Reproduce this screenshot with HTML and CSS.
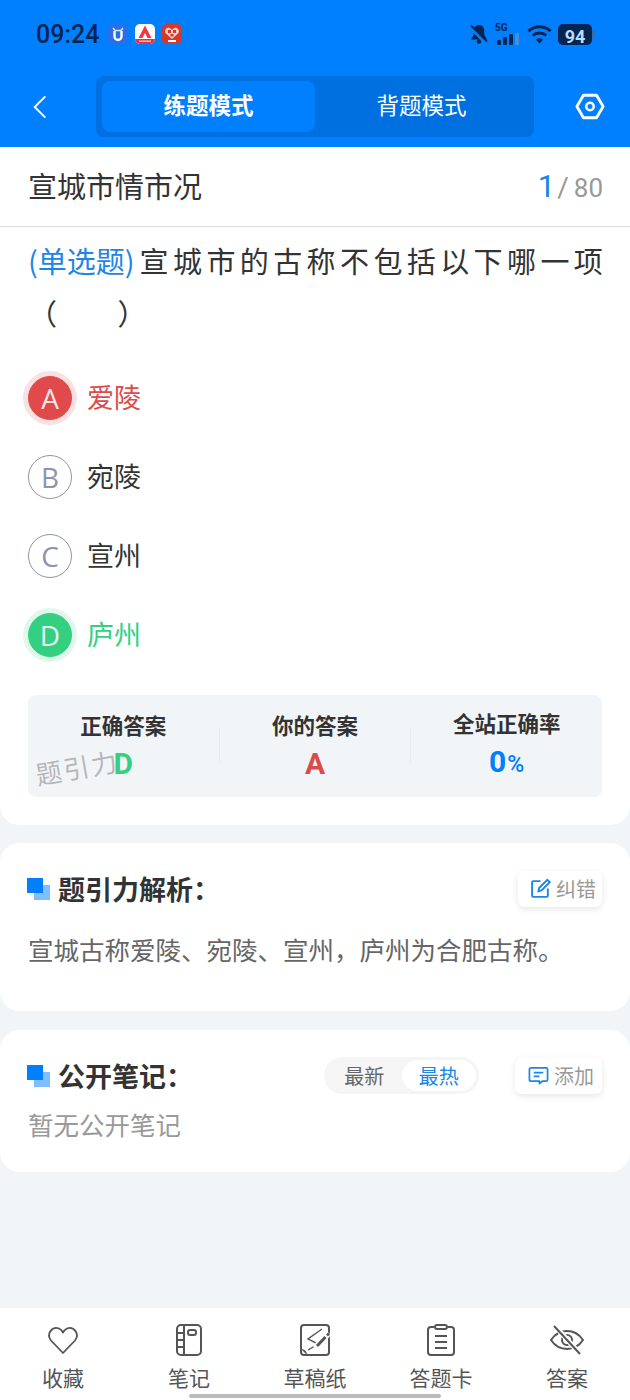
FILE: index.html
```html
<!DOCTYPE html>
<html lang="zh-CN">
<head>
  <meta charset="UTF-8">
  <title>练题模式</title>
  <link rel="stylesheet" href="styles.css">
</head>
<body>

<div class="app">
  <header class="top">
    <div class="status-bar">
      <div class="status-left">
        <span class="time">09:24</span>
        <svg class="app-icon" viewBox="0 0 20 20"><rect width="20" height="20" rx="5" fill="#2b6fe8"/><path d="M6.500 7v5.500a3.500 3.500 0 0 0 7 0V7" fill="none" stroke="#fff" stroke-width="2.400"/><path d="M5 4l2 2.500h6L15 4" fill="none" stroke="#d6e4ff" stroke-width="1.500"/></svg>
        <svg class="app-icon" viewBox="0 0 20 20"><rect width="20" height="20" rx="5" fill="#fff"/><path d="M10 1.500 16.500 14h-4L10 9l-2.500 5h-4z" fill="#ee3a44"/><path d="M0 15h20a5 5 0 0 1-5 5H5a5 5 0 0 1-5-5z" fill="#e8323c"/><rect x="4" y="16.500" width="12" height="1.400" fill="#f8c4c6"/></svg>
        <svg class="app-icon" viewBox="0 0 20 20"><rect width="20" height="20" rx="5" fill="#d8382c"/><path d="M10 15 3.500 9C1.800 5.800 5.500 2.600 8 4.200L10 5.800l2-1.600c2.500-1.600 6.200 1.600 4.500 4.800z" fill="#f6cfc4"/><path d="M6 6h3v3H6zM11 6h3v3h-3zM8.500 10h3v2.500h-3z" fill="#d8382c"/><rect x="6" y="16" width="8" height="2" fill="#fff"/></svg>
      </div>
      <div class="status-right">
        <svg class="bell" viewBox="0 0 20 20"><path d="M10 1c-3.400 0-5.300 2.500-5.300 5.600v4.400L2.500 14.500v1h15v-1L15.300 11V6.600C15.300 3.500 13.400 1 10 1z" fill="#04254f"/><circle cx="10" cy="17.500" r="2.300" fill="#04254f"/><path d="M1 3l16 16" stroke="#007fff" stroke-width="3.600"/><path d="M2 1.500l16 16" stroke="#04254f" stroke-width="1.800"/></svg>
        <div class="signal">
          <span class="net">5G</span>
          <svg viewBox="0 0 24 12" class="bars"><rect x="1" y="7" width="4" height="5" rx="1" fill="#04254f"/><rect x="7" y="4" width="4" height="8" rx="1" fill="#04254f"/><rect x="13" y="1" width="4" height="11" rx="1" fill="#04254f"/><rect x="19" y="0" width="4" height="12" rx="1" fill="#3d8fe0"/></svg>
        </div>
        <svg class="wifi" viewBox="0 0 26 20"><path d="M1.500 7C8 1 18 1 24.500 7" fill="none" stroke="#04254f" stroke-width="3"/><path d="M6 11.500c4-3.400 10-3.400 14 0" fill="none" stroke="#04254f" stroke-width="3"/><path d="M13 20l-3.800-4.300c2.200-1.600 5.400-1.600 7.600 0z" fill="#04254f"/></svg>
        <div class="battery"><span>94</span></div>
      </div>
    </div>
    <nav class="nav-bar">
      <svg class="back" viewBox="0 0 18 28"><path d="M15 2 3 14l12 12" fill="none" stroke="#fff" stroke-width="2.200"/></svg>
      <div class="mode-tabs">
        <div class="mode-tab active">练题模式</div>
        <div class="mode-tab">背题模式</div>
      </div>
      <svg class="gear" viewBox="0 0 32 28"><path d="M9 2h14l7 12-7 12H9L2 14z" fill="none" stroke="#fff" stroke-width="3" stroke-linejoin="round"/><circle cx="16" cy="14" r="4" fill="none" stroke="#fff" stroke-width="2.600"/></svg>
    </nav>
  </header>

  <section class="card question-card">
    <div class="title-row">
      <span class="chapter">宣城市情市况</span>
      <span class="progress"><b>1</b><i>/</i>80</span>
    </div>
    <div class="question">
      <div class="q-line"><span class="q-type">(单选题)</span><span>宣城市的古称不包括以下哪一项</span></div>
      <div class="q-line"><span>（</span><span class="blank"></span><span>）</span></div>
    </div>
    <ul class="options">
      <li class="option wrong"><span class="letter">A</span><span class="opt-text">爱陵</span></li>
      <li class="option"><span class="letter">B</span><span class="opt-text">宛陵</span></li>
      <li class="option"><span class="letter">C</span><span class="opt-text">宣州</span></li>
      <li class="option right"><span class="letter">D</span><span class="opt-text">庐州</span></li>
    </ul>
    <div class="stats">
      <div class="stat">
        <div class="stat-label">正确答案</div>
        <div class="stat-value green">D</div>
      </div>
      <div class="stat">
        <div class="stat-label">你的答案</div>
        <div class="stat-value red">A</div>
      </div>
      <div class="stat">
        <div class="stat-label">全站正确率</div>
        <div class="stat-value blue">0<small>%</small></div>
      </div>
      <span class="watermark">题引力</span>
    </div>
  </section>

  <section class="card analysis-card">
    <div class="card-head">
      <h2 class="card-title"><span class="squares"></span>题引力解析：</h2>
      <div class="mini-btn">
        <svg viewBox="0 0 20 20"><path d="M10 3H3a1 1 0 0 0-1 1v13a1 1 0 0 0 1 1h13a1 1 0 0 0 1-1v-7" fill="none" stroke="#1c86e6" stroke-width="1.800"/><path d="M8 12.500l.7-3L16.500 1.700l2.300 2.300-7.800 7.800z" fill="none" stroke="#1c86e6" stroke-width="1.800"/></svg>
        纠错
      </div>
    </div>
    <p class="analysis">宣城古称爱陵、宛陵、宣州，庐州为合肥古称。</p>
  </section>

  <section class="card notes-card">
    <div class="card-head">
      <h2 class="card-title"><span class="squares"></span>公开笔记：</h2>
      <div class="note-tools">
        <div class="sort">
          <span>最新</span>
          <span class="on">最热</span>
        </div>
        <div class="mini-btn wide">
          <svg viewBox="0 0 22 20"><path d="M3 2h16a1.500 1.500 0 0 1 1.500 1.500v11A1.500 1.500 0 0 1 19 16h-4l-3 2.500V16H3a1.500 1.500 0 0 1-1.500-1.500v-11A1.500 1.500 0 0 1 3 2z" fill="none" stroke="#1c86e6" stroke-width="1.800" stroke-linejoin="round"/><path d="M6 7h10M6 11h6" stroke="#1c86e6" stroke-width="1.800"/></svg>
          添加
        </div>
      </div>
    </div>
    <p class="empty">暂无公开笔记</p>
  </section>

  <footer class="tabbar">
    <div class="tab">
      <svg viewBox="0 0 34 32"><path d="M17 29 5 16.500C0 10 6 2 13 4.500c2 1 3 2 4 4 1-2 2-3 4-4 7-2.500 13 5.500 8 12z" fill="none" stroke="#555" stroke-width="1.800" stroke-linejoin="round"/></svg>
      <span>收藏</span>
    </div>
    <div class="tab">
      <svg viewBox="0 0 34 32"><rect x="5" y="1" width="24" height="30" rx="4" fill="none" stroke="#555" stroke-width="2"/><path d="M12 1v30M5 9h7M5 16h7M5 23h7" stroke="#555" stroke-width="2"/><rect x="16" y="6" width="8" height="5" rx="2" fill="none" stroke="#555" stroke-width="2"/></svg>
      <span>笔记</span>
    </div>
    <div class="tab">
      <svg viewBox="0 0 34 32"><path d="M9 31H6a3 3 0 0 1-3-3V4a3 3 0 0 1 3-3h22a3 3 0 0 1 3 3v24a3 3 0 0 1-3 3z" fill="none" stroke="#555" stroke-width="2"/><path d="M3 25c3 0 6 2 6 6z" fill="#555"/><path d="M24 5 10 15l10 5-10 6" fill="none" stroke="#555" stroke-width="1.400"/><path d="M17 24 31 9" stroke="#fff" stroke-width="6"/><path d="M19 22 27.500 13" stroke="#555" stroke-width="3"/><path d="M29 11.500 31 9.500" stroke="#555" stroke-width="2.600"/></svg>
      <span>草稿纸</span>
    </div>
    <div class="tab">
      <svg viewBox="0 0 34 32"><path d="M10 3H7a3 3 0 0 0-3 3v22a3 3 0 0 0 3 3h20a3 3 0 0 0 3-3V6a3 3 0 0 0-3-3h-3" fill="none" stroke="#555" stroke-width="2"/><rect x="11" y="1" width="12" height="4" rx="2" fill="none" stroke="#555" stroke-width="2"/><path d="M11 12h12M11 18h12M11 24h12" stroke="#555" stroke-width="2"/></svg>
      <span>答题卡</span>
    </div>
    <div class="tab">
      <svg viewBox="0 0 34 32"><path d="M1 16C9 4 25 4 33 16 25 28 9 28 1 16z" fill="none" stroke="#555" stroke-width="2"/><circle cx="17" cy="16" r="5" fill="none" stroke="#555" stroke-width="2"/><path d="M5 2l25 28" stroke="#fff" stroke-width="5"/><path d="M4 2l26 28" stroke="#555" stroke-width="2"/></svg>
      <span>答案</span>
    </div>
    <div class="home-bar"></div>
  </footer>
</div>

</body>
</html>
```

FILE: styles.css
```css
* {
  box-sizing: border-box;
}

body {
  margin: 0;
  background: #f2f5f8;
  font-family: "Noto Sans CJK SC", "Noto Sans", sans-serif;
  color: #333;
}

.app {
  width: 630px;
  height: 1400px;
  display: flex;
  flex-direction: column;
  position: relative;
  overflow: hidden;
}

/* header */

.top {
  height: 147px;
  background: #007fff;
  flex-shrink: 0;
}

.status-bar {
  height: 76px;
  padding: 14px 38px 0 36px;
  display: flex;
  justify-content: space-between;
  align-items: flex-start;
}

.status-left,
.status-right {
  display: flex;
  align-items: center;
  height: 40px;
}

.time {
  font-family: Roboto, sans-serif;
  font-size: 25px;
  font-weight: 500;
  color: #04254f;
  margin-right: 9px;
}

.app-icon {
  width: 20px;
  height: 20px;
  margin-right: 7px;
}

.bell {
  width: 20px;
  height: 20px;
  margin-right: 6px;
}

.signal {
  width: 25px;
  height: 21px;
  position: relative;
  margin-right: 7px;
}

.net {
  position: absolute;
  left: 0;
  top: 0;
  font-family: Roboto, sans-serif;
  font-size: 10px;
  line-height: 8px;
  font-weight: 700;
  color: #04254f;
}

.bars {
  position: absolute;
  left: 1px;
  bottom: 0;
  width: 24px;
  height: 12px;
}

.wifi {
  width: 25px;
  height: 20px;
  margin-right: 6px;
}

.battery {
  width: 34px;
  height: 21px;
  background: #04254f;
  border-radius: 5px;
  text-align: center;
  position: relative;
}

.battery::after {
  content: "";
  position: absolute;
  right: -3px;
  top: 6px;
  width: 3px;
  height: 9px;
  background: #2f6fb3;
  border-radius: 0 2px 2px 0;
}

.battery span {
  font-family: Roboto, sans-serif;
  font-size: 18px;
  font-weight: 700;
  line-height: 21px;
  color: #b9dcff;
}

.nav-bar {
  height: 61px;
  display: flex;
  align-items: center;
  padding: 0 25px 0 32px;
}

.back {
  width: 16px;
  height: 26px;
}

.mode-tabs {
  width: 438px;
  height: 61px;
  margin: 0 41px 0 48px;
  padding: 5px 6px;
  background: #0070e0;
  border-radius: 8px;
  display: flex;
}

.mode-tab {
  flex: 1;
  border-radius: 8px;
  text-align: center;
  line-height: 47px;
  font-size: 22.500px;
  color: #fff;
}

.mode-tab.active {
  background: #007fff;
  font-weight: 700;
}

.gear {
  width: 30px;
  height: 27px;
}

/* cards */

.card {
  background: #fff;
  border-radius: 20px;
  padding: 0 28px;
}

.question-card {
  height: 678px;
  border-radius: 0 0 20px 20px;
  margin-bottom: 18px;
}

.title-row {
  height: 80px;
  margin: 0 -28px;
  padding: 0 27px 0 28px;
  border-bottom: 1px solid #dcdcdc;
  display: flex;
  justify-content: space-between;
  align-items: center;
}

.chapter {
  font-size: 29px;
  line-height: 40px;
  margin-bottom: 4px;
  color: #333;
}

.progress {
  font-family: Roboto, sans-serif;
  font-size: 26px;
  color: #999;
}

.progress b {
  font-size: 31px;
  font-weight: 400;
  color: #1c86e6;
}

.progress i {
  font-style: normal;
  font-size: 28px;
  margin: 0 5px 0 2px;
}

.question {
  margin: 7px -8px 0 0;
  font-size: 29px;
  line-height: 52px;
  letter-spacing: 4.400px;
  color: #333;
}

.q-line {
  display: flex;
}

.q-type {
  color: #1c86e6;
  letter-spacing: 0;
  margin-right: 5px;
}

.blank {
  width: 56px;
}

.options {
  list-style: none;
  margin: 20px 0 0;
  padding: 0;
}

.option {
  height: 79px;
  display: flex;
  align-items: center;
  font-size: 27px;
  color: #333;
}

.opt-text {
  margin-bottom: 3px;
}

.letter {
  width: 44px;
  height: 44px;
  margin-right: 15px;
  border: 1.500px solid #8d93ab;
  border-radius: 50%;
  display: flex;
  align-items: center;
  justify-content: center;
  font-family: "Open Sans", sans-serif;
  font-size: 28px;
  color: #8d93ab;
}

.wrong,
.red {
  color: #dc4a4a;
}

.right,
.green {
  color: #35cf82;
}

.wrong .letter {
  background: #e04a4a;
  border-color: #e04a4a;
  color: #fbe4e4;
  box-shadow: 0 0 0 5px #f9e1e1;
}

.right .letter {
  background: #35cf82;
  border-color: #35cf82;
  color: #e4faf0;
  box-shadow: 0 0 0 5px #e0f8ec;
}

.stats {
  height: 102px;
  margin-top: 21px;
  padding-bottom: 2px;
  background: #f2f5f8;
  border-radius: 8px;
  display: flex;
  align-items: center;
  position: relative;
}

.stat {
  flex: 1;
  text-align: center;
  border-left: 1px solid #e8ebef;
  height: 36px;
  display: flex;
  flex-direction: column;
  align-items: center;
  justify-content: center;
}

.stat:first-child {
  border-left: none;
}

.stat-label {
  margin-top: 2px;
  font-size: 21.500px;
  font-weight: 700;
  line-height: 28px;
  color: #333;
  white-space: nowrap;
}

.stat-value {
  font-family: Roboto, sans-serif;
  font-size: 30px;
  font-weight: 700;
  line-height: 36px;
  margin-top: 7px;
}

.blue {
  color: #007fff;
}

.stat-value small {
  font-size: 23px;
  font-weight: 500;
  margin-left: 1px;
}

.watermark {
  position: absolute;
  left: 7px;
  top: 53px;
  font-size: 26px;
  color: rgba(120, 120, 120, 0.5);
  letter-spacing: 2px;
  transform: rotate(-10deg);
}

.analysis-card {
  height: 168px;
  margin-bottom: 19px;
}

.notes-card {
  height: 142px;
}

.card-head {
  display: flex;
  justify-content: space-between;
  align-items: center;
  padding-top: 25px;
  height: 66px;
}

.card-title {
  margin: 0;
  padding-bottom: 1px;
  display: flex;
  align-items: center;
  font-size: 27px;
  font-weight: 700;
  color: #333;
}

.squares {
  width: 23px;
  height: 22px;
  margin: 1px 8px 0 -1px;
  background:
    linear-gradient(#007fff, #007fff) 0 0 / 16px 15px no-repeat,
    linear-gradient(#7fbfff, #7fbfff) 7px 7px / 16px 15px no-repeat;
}

.mini-btn {
  width: 84px;
  height: 36px;
  padding-left: 12px;
  display: flex;
  align-items: center;
  gap: 5px;
  font-size: 20px;
  color: #999;
  background: #fff;
  border-radius: 6px;
  box-shadow: 0 2px 6px rgba(0, 0, 0, 0.1);
}

.mini-btn.wide {
  width: 87px;
  padding-left: 13px;
}

.mini-btn svg {
  width: 21px;
  height: 21px;
  flex-shrink: 0;
}

.analysis {
  margin: 18px 0 0;
  font-size: 25.500px;
  line-height: 44px;
  color: #666;
}

.note-tools {
  display: flex;
  align-items: center;
  gap: 36px;
}

.sort {
  width: 155px;
  height: 37px;
  padding: 3px;
  background: #f5f5f5;
  border-radius: 19px;
  display: flex;
  font-size: 20px;
  color: #666;
}

.sort span {
  flex: 1;
  text-align: center;
  line-height: 31px;
}

.sort .on {
  background: #fff;
  border-radius: 16px;
  color: #1c86e6;
}

.empty {
  margin: 8px 0 0;
  font-size: 25.500px;
  line-height: 40px;
  color: #999;
}

/* bottom bar */

.tabbar {
  margin-top: auto;
  height: 92px;
  background: #fff;
  display: flex;
  position: relative;
}

.tab {
  flex: 1;
  padding-top: 16px;
  display: flex;
  flex-direction: column;
  align-items: center;
  font-size: 21px;
  color: #555;
}

.tab svg {
  width: 34px;
  height: 32px;
}

.tab span {
  line-height: 30px;
  margin-top: 6px;
}

.home-bar {
  position: absolute;
  left: 189px;
  bottom: 2px;
  width: 252px;
  height: 4px;
  background: #bbb;
  border-radius: 2px;
}
```
